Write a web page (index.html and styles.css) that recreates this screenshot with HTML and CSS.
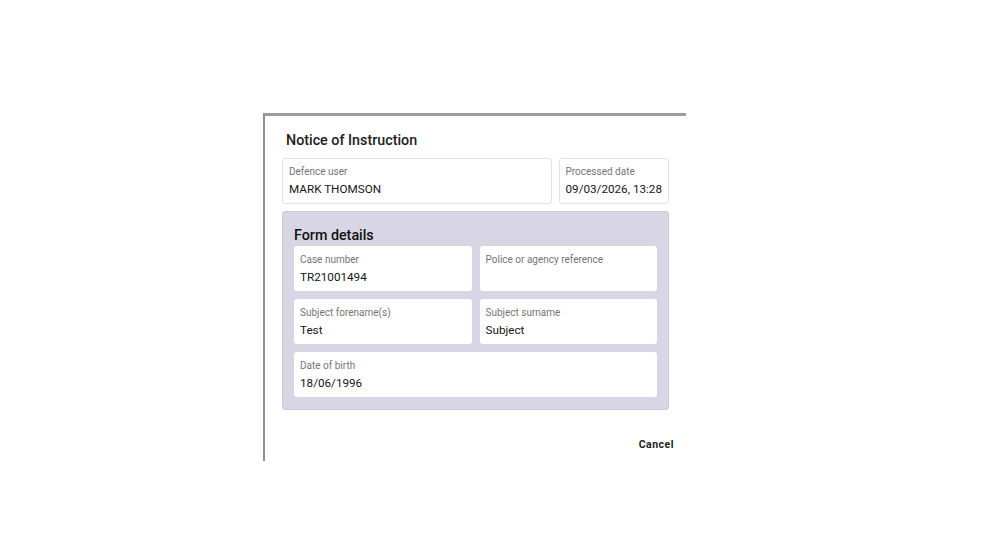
FILE: index.html
```html
<!DOCTYPE html>
<html lang="en">
<head>
<meta charset="utf-8">
<title>Notice of Instruction</title>
<link rel="stylesheet" href="styles.css">
</head>
<body>
<div class="stage">
  <div class="dialog">
    <h2 class="dialog-title">Notice of Instruction</h2>
    <div class="info-row">
      <div class="field field-outlined field-grow">
        <div class="field-label">Defence user</div>
        <div class="field-value">MARK THOMSON</div>
      </div>
      <div class="field field-outlined">
        <div class="field-label">Processed date</div>
        <div class="field-value">09/03/2026, 13:28</div>
      </div>
    </div>
    <section class="panel">
      <h3 class="panel-title">Form details</h3>
      <div class="panel-grid">
        <div class="field field-card">
          <div class="field-label">Case number</div>
          <div class="field-value">TR21001494</div>
        </div>
        <div class="field field-card">
          <div class="field-label">Police or agency reference</div>
          <div class="field-value"></div>
        </div>
        <div class="field field-card">
          <div class="field-label">Subject forename(s)</div>
          <div class="field-value">Test</div>
        </div>
        <div class="field field-card">
          <div class="field-label">Subject surname</div>
          <div class="field-value">Subject</div>
        </div>
        <div class="field field-card field-wide">
          <div class="field-label">Date of birth</div>
          <div class="field-value">18/06/1996</div>
        </div>
      </div>
    </section>
    <div class="actions">
      <button class="btn-text" type="button">Cancel</button>
    </div>
  </div>
</div>
</body>
</html>
```

FILE: styles.css
```css
* { box-sizing: border-box; }

html, body {
  margin: 0;
  padding: 0;
  background: #ffffff;
  font-family: Roboto, "Liberation Sans", Arial, sans-serif;
  color: #212121;
}

.stage {
  padding: 113px 0 0 263px;
  height: 560px;
}

.dialog {
  width: 423px;
  height: 348px;
  background: #ffffff;
  border-top: 3px solid #9c9c9c;
  border-left: 2px solid #8f8f8f;
  padding: 14px 17px 0 17px;
}

.dialog-title {
  margin: 0 0 8px 4px;
  font-size: 14.3px;
  line-height: 20px;
  font-weight: 500;
  color: #212121;
}

.info-row {
  display: flex;
  gap: 7px;
}

.field {
  padding: 7px 6px 0 6px;
  height: 46px;
  border-radius: 3px;
}

.field-outlined {
  border: 1px solid #e2e2e2;
  padding: 6px 6px 0 6px;
}

.field-grow { flex: 1; }

.field-label {
  font-size: 10px;
  line-height: 13px;
  color: #757575;
  margin-bottom: 2px;
}

.field-value {
  font-size: 11.7px;
  line-height: 18px;
  color: #161616;
  min-height: 18px;
}

.panel {
  margin-top: 7px;
  background: #d8d6e4;
  border: 1px solid #cbc9d9;
  border-radius: 3px;
  padding: 13px 11px 12px 11px;
}

.panel-title {
  margin: 0 0 1px 0;
  font-size: 14.3px;
  line-height: 20px;
  font-weight: 500;
  color: #111111;
}

.panel-grid {
  display: grid;
  grid-template-columns: 1fr 1fr;
  gap: 8px 8px;
}

.field-card {
  background: #ffffff;
  height: 45px;
  border-radius: 3px;
}

.field-wide { grid-column: 1 / span 2; }

.actions {
  display: flex;
  justify-content: flex-end;
  margin-right: -17px;
  padding: 26px 8px 0 0;
}

.btn-text {
  background: none;
  border: none;
  padding: 0 4px;
  font-family: Roboto, "Liberation Sans", Arial, sans-serif;
  font-size: 10.5px;
  line-height: 18px;
  font-weight: 700;
  letter-spacing: 0.5px;
  color: #212121;
  cursor: pointer;
}
```
